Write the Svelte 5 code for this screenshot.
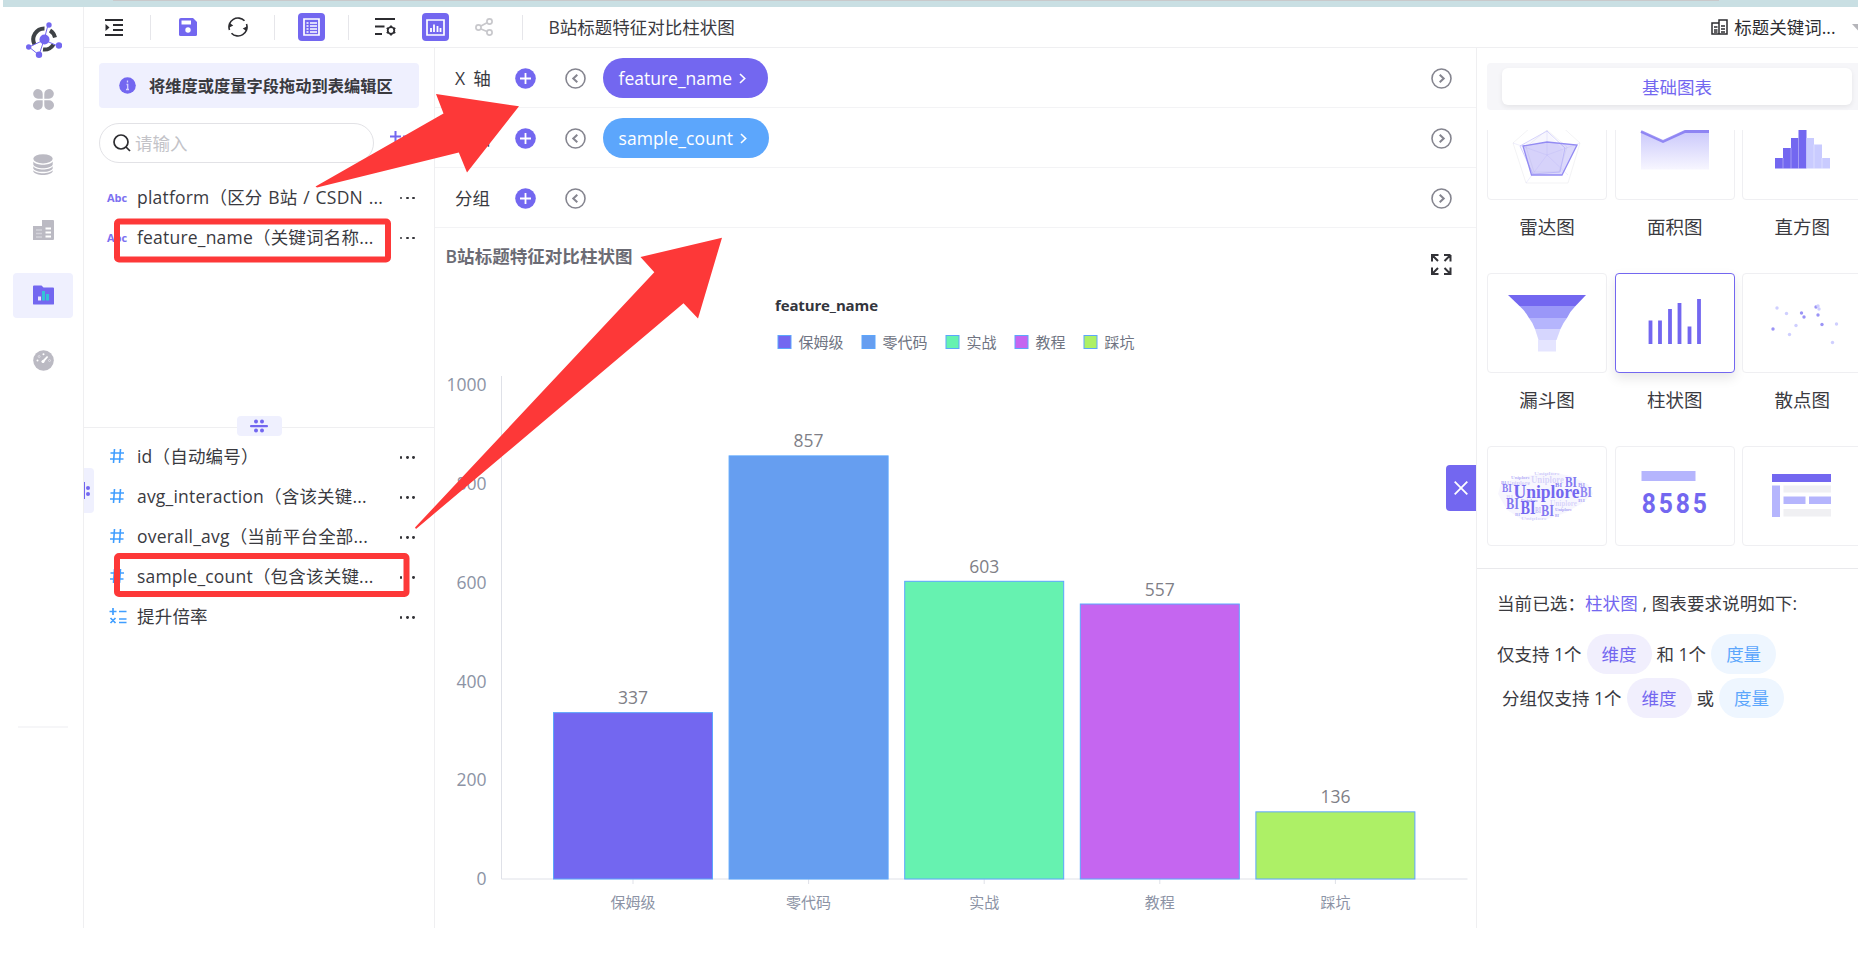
<script lang="ts">
	type Field = { type: string; label: string };

	const dimensions: Field[] = [
		{ type: 'abc', label: 'platform（区分 B站 / CSDN ...' },
		{ type: 'abc', label: 'feature_name（关键词名称...' }
	];

	const measures: Field[] = [
		{ type: 'num', label: 'id（自动编号）' },
		{ type: 'num', label: 'avg_interaction（含该关键...' },
		{ type: 'num', label: 'overall_avg（当前平台全部...' },
		{ type: 'num', label: 'sample_count（包含该关键...' },
		{ type: 'calc', label: '提升倍率' }
	];

	const axes = [
		{ name: 'X 轴', field: 'feature_name', kind: 'dimension' },
		{ name: 'Y 轴', field: 'sample_count', kind: 'measure' },
		{ name: '分组', field: '', kind: '' }
	];

	const bars = [
		{ name: '保姆级', value: 337, color: '#7367f0', legendX: 342.5 },
		{ name: '零代码', value: 857, color: '#669ef0', legendX: 426.5 },
		{ name: '实战', value: 603, color: '#66f2b0', legendX: 510.5 },
		{ name: '教程', value: 557, color: '#c566f0', legendX: 579.5 },
		{ name: '踩坑', value: 136, color: '#adf066', legendX: 648.5 }
	];
	const ticks = [0, 200, 400, 600, 800, 1000];

	// chart geometry, in svg units
	const baseY = 651;
	const barWidth = 159;
	const scaleY = (v: number) => baseY - v * 0.4937;
	const centerX = (i: number) => 198 + i * 175.6;

	const charts = [
		{ id: 'radar', name: '雷达图' },
		{ id: 'area', name: '面积图' },
		{ id: 'histogram', name: '直方图' },
		{ id: 'funnel', name: '漏斗图' },
		{ id: 'bar', name: '柱状图' },
		{ id: 'scatter', name: '散点图' },
		{ id: 'cloud', name: '' },
		{ id: 'kpi', name: '' },
		{ id: 'table', name: '' }
	];
	let selected = $state('bar');

	const dots = [
		[35, 35, 0], [44.5, 40.5, 0], [59.5, 40, 1], [62, 44, 1], [74, 34, 1], [76, 33, 0], [77, 36, 0],
		[76, 42, 1], [80, 51.5, 1], [94.5, 51, 0], [54, 52.5, 0], [47.5, 61.5, 0], [31, 56, 1], [90.5, 69.5, 0]
	];
	const words = [
		{ t: 'Uniplore', x: 26.5, y: 51.5, s: 18, w: 66, o: 1 },
		{ t: 'Uniplore', x: 44, y: 37, s: 10, w: 33, o: 0.25 },
		{ t: 'Uniplore', x: 20, y: 39, s: 7, w: 23, o: 0.3 },
		{ t: 'Uniplore', x: 63, y: 60, s: 9, w: 27, o: 0.25 },
		{ t: 'Uniplore', x: 34, y: 56, s: 4, w: 17, o: 0.7 },
		{ t: 'Uniplore', x: 68, y: 65, s: 4, w: 17, o: 0.6 },
		{ t: 'Uniplore', x: 24, y: 33, s: 4, w: 19, o: 0.5 },
		{ t: 'Uniplore', x: 47, y: 29, s: 4, w: 26, o: 0.3 },
		{ t: 'Uniplore', x: 34, y: 74, s: 4, w: 26, o: 0.25 },
		{ t: 'BI', x: 15, y: 46, s: 12, w: 10, o: 0.85 },
		{ t: 'BI', x: 14, y: 38, s: 5, w: 5, o: 0.6 },
		{ t: 'BI', x: 19, y: 63, s: 16, w: 13, o: 0.9 },
		{ t: 'BI', x: 33.5, y: 68, s: 18, w: 15, o: 1 },
		{ t: 'BI', x: 54, y: 70, s: 16, w: 13, o: 0.9 },
		{ t: 'BI', x: 48, y: 67, s: 9, w: 6, o: 0.4 },
		{ t: 'BI', x: 78, y: 41, s: 14, w: 12, o: 0.9 },
		{ t: 'BI', x: 68, y: 41, s: 7, w: 7, o: 0.8 },
		{ t: 'BI', x: 91, y: 41, s: 7, w: 7, o: 0.6 },
		{ t: 'BI', x: 93, y: 50.5, s: 14, w: 12, o: 0.8 },
		{ t: 'BI', x: 91, y: 56, s: 5, w: 7, o: 0.5 },
		{ t: 'BI', x: 19, y: 53, s: 7, w: 7, o: 0.2 },
		{ t: 'BI', x: 28, y: 70, s: 5, w: 5, o: 0.5 },
		{ t: 'BI', x: 68, y: 71, s: 4, w: 4, o: 0.6 }
	];
</script>

{#snippet fieldRow(field: Field)}
	<div class="field">
		<span class="field-icon">
			{#if field.type === 'abc'}
				<b class="abc">Abc</b>
			{:else if field.type === 'num'}
				<svg width="16" height="16" viewBox="0 0 16 16" fill="none" stroke="#409eff" stroke-width="1.6">
					<path d="M5.5 1 4.5 15M11.5 1l-1 14M1.5 5h13.5M1 11h13.5" />
				</svg>
			{:else}
				<svg width="18" height="16" viewBox="0 0 18 16" fill="none" stroke="#409eff" stroke-width="1.7">
					<path d="M4 0v7M.5 3.5h7M10 3.5h7.5M1.5 10l5 5M6.500 10l-5 5M10 11h7.500M10 14.500h7.500" />
				</svg>
			{/if}
		</span>
		<span class="field-label">{field.label}</span>
		<span class="more"><i></i><i></i><i></i></span>
	</div>
{/snippet}

<div class="page">
	<div class="browser-strip"><span></span></div>

	<div class="app">
		<nav class="sidebar">
			<svg class="logo" width="36" height="36" viewBox="0 0 36 36" fill="none">
				<path d="M18.500 6.500A11 11 0 0 0 8.500 22.500" stroke="#3e4246" stroke-width="4" />
				<path d="M24 8.500A11 11 0 0 1 29 15.500" stroke="#3e4246" stroke-width="4" />
				<path d="M17 27.500A11 11 0 0 0 27.500 22.500" stroke="#3e4246" stroke-width="4" />
				<path d="m22 3-4 15L3 25l10 8 5-15 14 6" stroke="#7367f0" stroke-width="1" />
				<g fill="#7367f0">
					<circle cx="18.500" cy="17.500" r="5" />
					<circle cx="23" cy="3" r="2.700" />
					<circle cx="33" cy="23.500" r="3.200" />
					<circle cx="2.700" cy="25" r="2.700" />
					<circle cx="13" cy="32.700" r="3.200" />
				</g>
			</svg>
			<div class="nav-item">
				<svg width="21" height="21" viewBox="0 0 21 21" fill="#bbbac3">
					<path d="M5 0a5 5 0 0 1 4.700 5v4.700H5A4.850 4.850 0 0 1 5 0Zm11 0a4.850 4.850 0 0 1 0 9.700h-4.700V5A5 5 0 0 1 16 0ZM5 11.300h4.700V16A4.850 4.850 0 1 1 5 11.300Zm6.300 0H16A4.850 4.850 0 1 1 11.300 16Z" />
				</svg>
			</div>
			<div class="nav-item">
				<svg width="20" height="21" viewBox="0 0 20 21" fill="#bbbac3">
					<ellipse cx="10" cy="4.800" rx="9.700" ry="4.600" />
					<path d="M.3 7.500c3 4.300 16.400 4.300 19.400 0v3c-2 5-17.400 5-19.400 0ZM.3 12.200c3 4.300 16.400 4.300 19.400 0v2.200c-2 4.600-17.400 4.600-19.400 0ZM.3 16.200c3 4 16.400 4 19.400 0v1.300c-2 4.600-17.400 4.600-19.400 0Z" />
				</svg>
			</div>
			<div class="nav-item">
				<svg width="21" height="20" viewBox="0 0 21 20" fill="none">
					<path d="M0 6h9V0h11a1 1 0 0 1 1 1v18a1 1 0 0 1-1 1H0Z" fill="#bbbac3" />
					<path d="M3 10h6M3 13.500h6M3 17h6" stroke="#d4d3da" stroke-width="1.500" />
					<path d="M12.500 8.500H18M12.500 12.500H18M12.500 16.500H18" stroke="#fff" stroke-width="2" />
				</svg>
			</div>
			<div class="nav-item active">
				<svg width="21" height="20" viewBox="0 0 21 20">
					<path d="M0 1.500Q0 .5 1 .5h7.500l2 2H20a1 1 0 0 1 1 1V18a1.200 1.200 0 0 1-1 1.500H1A1.200 1.200 0 0 1 0 18Z" fill="#7367f0" />
					<path d="M5 11.500h3v4H5Z" fill="#e8e6ff" />
					<path d="M9 6h3v9.500H9ZM13 9h3v6.500h-3Z" fill="#33c3d6" />
				</svg>
			</div>
			<div class="nav-item">
				<svg width="21" height="21" viewBox="0 0 21 21">
					<circle cx="10.500" cy="10.500" r="10.300" fill="#bbbac3" />
					<path d="m8.500 11.500 5.500-5.500 1.200 1-5 6Z" fill="#fff" />
					<circle cx="10" cy="11.500" r="1.500" fill="#fff" />
					<g fill="#fff"><circle cx="10.500" cy="4.200" r="1" /><circle cx="4.500" cy="10.500" r="1" /></g>
					<g fill="none" stroke="#e3e2e8" stroke-width=".8"><circle cx="6.200" cy="6.500" r="1" /><circle cx="16.500" cy="10.500" r="1" /></g>
				</svg>
			</div>
			<hr />
		</nav>

		<div class="main">
			<header class="toolbar">
				<svg class="t-indent" width="18" height="17" viewBox="0 0 18 17" fill="none" stroke="#2c2c30" stroke-width="1.800">
					<path d="M0 1h18M8 6h10M8 11h10M0 16h18" />
					<path d="M.5 5v7L4.500 8.500Z" fill="#2c2c30" stroke="none" />
				</svg>
				<span class="sep s1"></span>
				<svg class="t-save" width="18" height="18" viewBox="0 0 18 18">
					<path d="M2 0h12l4 4v12.500a1.500 1.500 0 0 1-1.500 1.500h-15A1.500 1.500 0 0 1 0 16.500V2a2 2 0 0 1 2-2Z" fill="#7367f0" />
					<path d="M2.500 2.500H12v4H2.500Z" fill="#fff" /><circle cx="9" cy="12" r="2.700" fill="#fff" />
				</svg>
				<svg class="t-refresh" width="20" height="20" viewBox="0 0 20 20" fill="none" stroke="#2c2c30" stroke-width="1.600">
					<path d="M1.500 13A9 9 0 0 1 16.500 3.800M18.500 7A9 9 0 0 1 3.500 16.200" />
					<path d="M0 8.500 1.500 13.500 5 10M20 11.500 18.500 6.500 15 10" fill="#2c2c30" stroke="none" transform="rotate(18 10 10)" />
				</svg>
				<span class="sep s2"></span>
				<span class="tool-on">
					<svg width="17" height="18" viewBox="0 0 17 18" fill="none" stroke="#fff">
						<path d="M1 1h15v16H1Z" stroke-width="1.700" />
						<path d="M3.500 5h2M7 5h7M3.500 8h2M7 8h7M3.500 11h2M7 11h7M3.500 14h2M7 14h7" stroke-width="1.300" />
					</svg>
				</span>
				<span class="sep s3"></span>
				<svg class="t-filter" width="21" height="18" viewBox="0 0 21 18" fill="none" stroke="#2c2c30" stroke-width="1.800">
					<path d="M0 1h20M0 8.500h9.500M0 16h7" />
					<circle cx="16" cy="12.500" r="3.300" />
					<path d="M16 7.500v2M16 15.500v2M11.700 10l1.700 1M18.600 14l1.700 1M11.700 15l1.700-1M18.600 11l1.700-1" />
				</svg>
				<span class="tool-on">
					<svg width="19" height="17" viewBox="0 0 19 17" fill="none" stroke="#fff">
						<path d="M1 1h17v15H1Z" stroke-width="1.700" />
						<path d="M5 9v4M8 5.500V13M11.500 7v6M14.500 9v4" stroke-width="1.800" />
					</svg>
				</span>
				<svg class="t-share" width="19" height="18" viewBox="0 0 19 18" fill="none" stroke="#c8c8cc" stroke-width="1.700">
					<circle cx="3.500" cy="9.500" r="2.600" /><circle cx="14.500" cy="3.500" r="2.600" /><circle cx="14.500" cy="14.500" r="2.600" />
					<path d="m6 8 6-3.200M6 11l6 2.500" />
				</svg>
				<span class="sep s4"></span>
				<span class="doc-title">B站标题特征对比柱状图</span>
				<div class="dataset">
					<svg width="17" height="16" viewBox="0 0 17 16" fill="none" stroke="#2c2c30" stroke-width="1.500">
						<path d="M8 15H1V4h7M8 15V1h8v14ZM3 8h3.500M3 11h3.500M3 13h3.500M10 7h4M10 10h4M10 13h4" />
					</svg>
					<span>标题关键词...</span>
					<svg class="caret" width="12" height="7" viewBox="0 0 12 7"><path d="M0 0h12L6 6.500Z" fill="#b5b5ba" /></svg>
				</div>
			</header>

			<div class="columns">
				<aside class="fields">
					<div class="hint">
						<svg width="17" height="17" viewBox="0 0 17 17">
							<circle cx="8.500" cy="8.500" r="8.300" fill="#7367f0" />
							<path d="M8.500 3.500v2M7.500 7.500h1.200v5M7 12.500h3" fill="none" stroke="#d6d2ff" stroke-width="1.300" />
						</svg>
						<span>将维度或度量字段拖动到表编辑区</span>
					</div>
					<div class="search-line">
						<div class="search">
							<svg width="18" height="18" viewBox="0 0 18 18" fill="none" stroke="#2c2c30" stroke-width="1.700">
								<circle cx="8" cy="8" r="7" /><path d="m13 13 4 4" />
							</svg>
							<span>请输入</span>
						</div>
						<svg class="add" width="22" height="22" viewBox="0 0 22 22" fill="none" stroke="#7367f0" stroke-width="2">
							<path d="M5.500 0v11M0 5.500h11M13 5.500h8M1 18h20" />
						</svg>
					</div>
					<div class="list dims">
						{#each dimensions as field}{@render fieldRow(field)}{/each}
					</div>
					<div class="splitter">
						<span class="grip">
							<svg width="18" height="14" viewBox="0 0 18 14" fill="#7367f0">
								<rect y="6" width="18" height="2.300" rx="1" />
								<circle cx="6" cy="2.500" r="2" /><circle cx="12" cy="2.500" r="2" />
								<circle cx="6" cy="11.500" r="2" /><circle cx="12" cy="11.500" r="2" />
							</svg>
						</span>
					</div>
					<div class="list">
						{#each measures as field}{@render fieldRow(field)}{/each}
					</div>
					<span class="side-grip"><i></i><i></i></span>
				</aside>

				<section class="canvas">
					{#each axes as axis}
						<div class="axis-row">
							<span class="axis-name">{axis.name}</span>
							<svg width="21" height="21" viewBox="0 0 21 21">
								<circle cx="10.500" cy="10.500" r="10.300" fill="#7367f0" />
								<path d="M10.500 5v11M5 10.500h11" stroke="#fff" stroke-width="1.800" />
							</svg>
							<svg class="prev" width="21" height="21" viewBox="0 0 21 21" fill="none" stroke="#85858f" stroke-width="1.600">
								<circle cx="10.500" cy="10.500" r="9.500" /><path d="m12.300 6.800-4 3.700 4 3.700" stroke-width="2" />
							</svg>
							{#if axis.field}
								<span class="pill {axis.kind}">
									{axis.field}
									<svg width="7" height="11" viewBox="0 0 7 11" fill="none" stroke="#fff" stroke-width="1.600"><path d="m1 1 4.700 4.500L1 10" /></svg>
								</span>
							{/if}
							<svg class="next" width="21" height="21" viewBox="0 0 21 21" fill="none" stroke="#85858f" stroke-width="1.600">
								<circle cx="10.500" cy="10.500" r="9.500" /><path d="m8.700 6.800 4 3.700-4 3.700" stroke-width="2" />
							</svg>
						</div>
					{/each}

					<svg class="chart" width="1041" height="700" viewBox="0 0 1041 700">
						<text class="chart-title" x="10.500" y="35" textLength="187">B站标题特征对比柱状图</text>
						<path class="expand" d="m997 27 6 6M997 33.500V27h6.500M1015.500 27h-6.500M1015.500 27v6.500M1015.500 27l-6 6M997 39.500V46h6.500M997 46l6-6M1015.500 39.500V46h-6.500M1015.500 46l-6-6" />
						<text class="legend-title" x="340" y="82.500" textLength="103">feature_name</text>
						{#each bars as bar}
							<rect class="mark" x={bar.legendX + 0.5} y="107.500" width="13" height="13" fill={bar.color} />
							<text class="legend" x={bar.legendX + 21} y="120">{bar.name}</text>
						{/each}
						<path class="axis" d="M66.500 148v503H1032.500" />
						{#each ticks as t}
							<text class="tick" x="51.500" y={scaleY(t) + 6} text-anchor="end">{t}</text>
						{/each}
						{#each bars as bar, i}
							<path class="axis" d="M{centerX(i)} 651v5" />
							<rect class="mark" x={centerX(i) - barWidth / 2} y={scaleY(bar.value)} width={barWidth} height={baseY - scaleY(bar.value)} fill={bar.color} />
							<text class="value" x={centerX(i)} y={scaleY(bar.value) - 8.5} text-anchor="middle">{bar.value}</text>
							<text class="category" x={centerX(i)} y="680" text-anchor="middle">{bar.name}</text>
						{/each}
					</svg>

					<button class="close" aria-label="close">
						<svg width="14" height="14" viewBox="0 0 14 14" stroke="#fff" stroke-width="1.800"><path d="m.7.7 12.600 12.600M13.300.7.7 13.300" /></svg>
					</button>
				</section>

				<aside class="picker">
					<div class="tabs"><span class="tab">基础图表</span></div>
					<div class="gallery">
						<div class="grid">
							{#each charts as chart}
								<div class="cell">
									<button class="card" class:selected={selected === chart.id} aria-label={chart.id} onclick={() => (selected = chart.id)}>
										<svg width="120" height="100" viewBox="0 0 120 100">
											{#if chart.id === 'radar'}
												<path d="M60 13 93 43 81 83H39L26 43ZM60 30l20 17-8 25H47l-8-25Z" fill="none" stroke="#f3f3f5" />
												<path d="M60 31 76 50 73 72 45 74 34 46Z" fill="#7367f0" fill-opacity=".06" />
												<path d="M60 31 78 48 73 72 46 74 33 46Z" fill="none" stroke="#d5d3fc" />
												<path d="m36 46 24-4 30 3-15 30H44.500Z" fill="#7367f0" fill-opacity=".25" stroke="#938bf3" stroke-width="1.300" />
												<path d="M60 30v25l21 20M60 55 39 83M60 55l33-12M60 55 26 43" fill="none" stroke="#9b93f4" stroke-opacity=".15" />
											{:else if chart.id === 'area'}
												<defs>
													<linearGradient id="area-fill" x1="0" y1="0" x2="0" y2="1"><stop stop-color="#c9c7fb" /><stop offset="1" stop-color="#f7f6ff" /></linearGradient>
												</defs>
												<path d="m26 31 22 10 23-11h23v39.500H26Z" fill="url(#area-fill)" />
												<path d="m26 31.500 22 10 22-10h24" fill="none" stroke="#7367f0" stroke-opacity=".7" stroke-width="2.800" />
											{:else if chart.id === 'histogram'}
												<path d="M33 58h8V48h8V38h7.500V30h8v38.500H33Z" fill="#7367f0" />
												<path d="M64.500 38H72v6.500h8V58h8v10.500H64.500Z" fill="#c9cbff" />
												<path d="M41 58v10.500M49 48v20.500M56.500 38v30.500M72 44.500v24M80 58v10.500" stroke="#fff" stroke-opacity=".35" />
											{:else if chart.id === 'funnel'}
												<path d="M21 22h78L88.500 33h-56Z" fill="#7367f0" />
												<path d="M32.500 33h56q-6 6-8.500 12H42q-3-6-9.500-12Z" fill="#9a97f8" />
												<path d="M42 45h38q-4 5-6.500 11H48q-2-6-6-11Z" fill="#b5b5fd" />
												<path d="M48 56h25.500L69.500 67h-18Z" fill="#d6d6fe" />
												<path d="M51 67h18v11.500H51Z" fill="#e5e5ff" />
											{:else if chart.id === 'bar'}
												<path d="M35.500 47.500V71M45 47.500V71M55 36v35M64.500 30v41M74.500 53.500V71M84 26v45" stroke="#7367f0" stroke-width="3.800" />
											{:else if chart.id === 'scatter'}
												{#each dots as [x, y, dark]}
													<circle cx={x} cy={y} r="1.700" fill={dark ? '#9b94f6' : '#cfcfff'} />
												{/each}
											{:else if chart.id === 'cloud'}
												<path d="M14 37 40 30l24-4 20 4 18 9 4 9-12 10-16 9-20 7-24-1-14-9-9-16Z" fill="#7367f0" fill-opacity=".06" />
												{#each words as w}
													<text class="word" x={w.x} y={w.y} font-size={w.s} textLength={w.w} lengthAdjust="spacingAndGlyphs" fill-opacity={w.o}>{w.t}</text>
												{/each}
											{:else if chart.id === 'kpi'}
												<path d="M26.500 25h54v10h-54Z" fill="#b5b5fd" />
												<text class="kpi" transform="scale(.88 1)" x="30.500" y="67.500" textLength="74">8585</text>
											{:else}
												<path d="M30 28h59v8H30Z" fill="#7367f0" />
												<path d="M30 39.500h8v31.500h-8ZM41.500 50.500h22v7.500h-22ZM67 50.500h22v7.500H67Z" fill="#b5b5fd" />
												<path d="M41.500 39.500H89v7H41.500ZM41.500 63H89v7.500H41.500Z" fill="#f0f0f3" />
											{/if}
										</svg>
									</button>
									{#if chart.name}<span class="card-name">{chart.name}</span>{/if}
								</div>
							{/each}
						</div>
					</div>
					<div class="rules">
						<p>当前已选：<em>柱状图</em>&nbsp;, 图表要求说明如下:</p>
						<div class="rule first">仅支持 1个<span class="tag dim">维度</span>和 1个<span class="tag mea">度量</span></div>
						<div class="rule second">分组仅支持 1个<span class="tag dim">维度</span>或<span class="tag mea">度量</span></div>
					</div>
				</aside>
			</div>
		</div>
	</div>

	<!-- red callouts over the workspace -->
	<svg class="callouts" width="1858" height="956" viewBox="0 0 1858 956">
		<g fill="none" stroke="#fd3838" stroke-width="6" stroke-linejoin="round">
			<rect x="117" y="221.500" width="271" height="38" rx="2" />
			<rect x="117" y="556" width="289.500" height="38" rx="2" />
		</g>
		<g fill="#fd3838">
			<path d="M315.500 186.500 443.500 113.500 436 94l83 12.300L467 172.500 458.800 152.500 317 187.500Z" />
			<path d="M415 527.500 654.300 272.300 640.500 257 722 237.700 698 318.500 683.500 303.300 416 529Z" />
		</g>
	</svg>
</div>

<style>
	:global(body) {
		margin: 0;
		background: #fff;
	}

	.page {
		position: relative;
		width: 1858px;
		height: 956px;
		overflow: hidden;
		font-family: 'Open Sans', 'Noto Sans CJK SC', sans-serif;
		font-size: 17.5px;
		line-height: 24px;
		color: #3a3a3f;
		white-space: nowrap;
	}

	.page * {
		box-sizing: border-box;
	}

	svg {
		display: block;
		flex: none;
	}

	.browser-strip {
		height: 7px;
		margin-left: 3px;
		padding-left: 110px;
		background: #c9dfe3;
	}

	.browser-strip span {
		display: block;
		width: 1606px;
		height: 1px;
		background: #c9c9cb;
	}

	.app {
		display: flex;
		height: 921px;
	}

	.sidebar {
		width: 84px;
		padding: 15px 10px 0 13px;
		border-right: 1px solid #efeff1;
	}

	.logo {
		margin: 0 0 19px 13px;
	}

	.nav-item {
		display: flex;
		align-items: center;
		justify-content: center;
		width: 60px;
		height: 45px;
		margin-bottom: 20.3px;
		border-radius: 4px;
	}

	.nav-item.active {
		background: #eff0fe;
	}

	.sidebar hr {
		width: 50px;
		height: 2px;
		margin: 343px 0 0 5px;
		border: 0;
		background: #f6f6f8;
	}

	.main {
		flex: 1;
		min-width: 0;
	}

	.toolbar {
		display: flex;
		align-items: center;
		height: 41px;
		padding-left: 21px;
		border-bottom: 1px solid #efeff1;
		overflow: hidden;
	}

	.sep {
		width: 1px;
		height: 25px;
		background: #e6e6ea;
	}

	.s1 {
		margin: 0 28px 0 27px;
	}

	.t-refresh {
		margin-left: 31px;
	}

	.s2 {
		margin: 0 23px 0 26px;
	}

	.s3 {
		margin: 0 26px 0 23px;
	}

	.t-filter {
		margin-right: 26px;
	}

	.t-share {
		margin-left: 26px;
	}

	.s4 {
		margin: 0 25.5px 0 28px;
	}

	.tool-on {
		display: flex;
		align-items: center;
		justify-content: center;
		width: 27px;
		height: 28px;
		border-radius: 4px;
		background: #7367f0;
	}

	.dataset {
		display: flex;
		align-items: center;
		gap: 6px;
		margin-left: auto;
		margin-right: -5.5px;
		color: #2c2c30;
	}

	.caret {
		margin-left: 10px;
	}

	.columns {
		display: flex;
		height: 880px;
	}

	.fields {
		position: relative;
		width: 351px;
		border-right: 1px solid #efeff1;
	}

	.hint {
		display: flex;
		align-items: center;
		gap: 13px;
		height: 45px;
		margin: 15px 15px 0;
		padding-left: 20px;
		border-radius: 4px;
		background: #eff0fe;
		font-size: 16.25px;
		font-weight: 600;
	}

	.search-line {
		display: flex;
		margin: 15px 0 0 15px;
	}

	.search {
		display: flex;
		align-items: center;
		gap: 4px;
		width: 275px;
		height: 40px;
		padding-left: 13px;
		border: 1px solid #e2e2e6;
		border-radius: 20px;
		color: #c3c3c8;
	}

	.add {
		margin: 8px 0 0 16px;
	}

	.list {
		padding-top: 8px;
	}

	.dims {
		height: 264px;
		padding-top: 13.5px;
	}

	.field {
		display: flex;
		align-items: center;
		height: 40px;
		padding-left: 23px;
	}

	.field-icon {
		width: 30px;
		padding-left: 1.5px;
	}

	.field-label {
		letter-spacing: 0.2px;
		word-spacing: 1px;
	}

	.abc {
		margin-left: -1.5px;
		color: #7c71f1;
		font-size: 11px;
	}

	.more {
		display: flex;
		gap: 3.5px;
		margin: 3px 19px 0 auto;
	}

	.more i {
		width: 2.8px;
		height: 2.8px;
		border-radius: 50%;
		background: #333338;
	}

	.splitter {
		display: flex;
		justify-content: center;
		height: 1px;
		background: #efeff1;
	}

	.grip {
		display: flex;
		align-items: center;
		justify-content: center;
		width: 45px;
		height: 20px;
		margin-top: -11px;
		border-radius: 4px;
		background: #eff0fe;
	}

	.side-grip {
		position: absolute;
		left: 0;
		top: 420px;
		display: flex;
		flex-direction: column;
		justify-content: center;
		gap: 2px;
		width: 10px;
		height: 45px;
		padding-left: 2px;
		border-radius: 0 4px 4px 0;
		background: linear-gradient(#7367f0, #7367f0) left center / 1px 17px no-repeat #eff0fe;
	}

	.side-grip i {
		width: 4px;
		height: 4px;
		border-radius: 50%;
		background: #7367f0;
	}

	.canvas {
		position: relative;
		width: 1042px;
		border-right: 1px solid #efeff1;
	}

	.axis-row {
		display: flex;
		align-items: center;
		height: 60px;
		padding: 1px 24px 0 20px;
		border-bottom: 1px solid #f3f3f5;
	}

	.axis-name {
		width: 59.5px;
		word-spacing: 3.5px;
	}

	.prev {
		margin: 0 17.5px 0 29px;
	}

	.next {
		margin-left: auto;
	}

	.pill {
		display: flex;
		align-items: center;
		gap: 7px;
		height: 40px;
		padding: 0 22px 0 15.5px;
		border-radius: 20px;
		color: #fff;
	}

	.pill.dimension {
		background: #7367f0;
	}

	.pill.measure {
		background: #5ca6fc;
		letter-spacing: 0.1px;
	}

	.chart-title {
		font-size: 17.5px;
		font-weight: 600;
		fill: #6b6b74;
	}

	.expand {
		fill: none;
		stroke: #333338;
		stroke-width: 2;
	}

	.legend-title {
		font-size: 15px;
		font-weight: 700;
		fill: #33353d;
	}

	.legend {
		font-size: 15px;
		fill: #6f7482;
	}

	.mark {
		stroke: #5ca6fc;
		stroke-width: 1;
	}

	.axis {
		fill: none;
		stroke: #dfe1e8;
	}

	.tick {
		font-size: 17.5px;
		fill: #8c93a5;
	}

	.value {
		font-size: 17.5px;
		fill: #7f7f87;
	}

	.category {
		font-size: 15px;
		fill: #8c93a5;
	}

	.close {
		position: absolute;
		right: 0;
		top: 417px;
		display: flex;
		align-items: center;
		justify-content: center;
		width: 30px;
		height: 46px;
		padding: 0;
		border: 0;
		border-radius: 4px 0 0 4px;
		background: #7367f0;
	}

	.picker {
		width: 381px;
		overflow: hidden;
	}

	.tabs {
		display: flex;
		width: 400px;
		height: 47px;
		margin: 15px 0 0 10px;
		padding: 5px 15px;
		border-radius: 4px;
		background: #f6f6f9;
	}

	.tab {
		display: flex;
		align-items: center;
		justify-content: center;
		width: 350px;
		height: 37px;
		border-radius: 6px;
		background: #fff;
		box-shadow: 0 2px 5px rgba(0, 0, 0, 0.07);
		color: #7367f0;
	}

	.gallery {
		height: 439px;
		margin-top: 20px;
		padding-left: 10px;
		overflow: hidden;
		border-bottom: 1px solid #e9e9ec;
	}

	.grid {
		display: grid;
		grid-template-columns: repeat(3, 120px);
		grid-auto-rows: 173px;
		column-gap: 7.7px;
		margin-top: -30px;
	}

	.cell {
		display: flex;
		flex-direction: column;
		align-items: center;
	}

	.card {
		width: 120px;
		height: 100px;
		padding: 0;
		border: 1px solid #efeff2;
		border-radius: 4px;
		background: #fff;
	}

	.card svg {
		margin: -1px;
	}

	.card.selected {
		border-color: #7367f0;
		box-shadow: 0 5px 12px rgba(0, 0, 0, 0.1);
	}

	.card-name {
		margin-top: 14.5px;
		font-size: 18.5px;
	}

	.word {
		font-family: 'Liberation Serif', serif;
		font-weight: 700;
		fill: #7367f0;
	}

	.kpi {
		font-family: Roboto, sans-serif;
		font-size: 28px;
		font-weight: 700;
		fill: #7367f0;
	}

	.rules {
		padding: 21.5px 0 0 20px;
	}

	.rules p {
		margin: 0;
		letter-spacing: 0.1px;
	}

	.rules em {
		font-style: normal;
		color: #7367f0;
	}

	.rule {
		display: flex;
		align-items: center;
		height: 40px;
		margin-bottom: 4px;
	}

	.first {
		margin-top: 19px;
	}

	.second {
		padding-left: 5px;
	}

	.tag {
		display: flex;
		align-items: center;
		justify-content: center;
		width: 65px;
		height: 40px;
		margin: 0 5px;
		border-radius: 20px;
	}

	.tag.dim {
		background: #f1effd;
		color: #7367f0;
	}

	.tag.mea {
		background: #eef6ff;
		color: #5ca6fc;
	}

	.callouts {
		position: absolute;
		left: 0;
		top: 0;
		pointer-events: none;
	}
</style>
